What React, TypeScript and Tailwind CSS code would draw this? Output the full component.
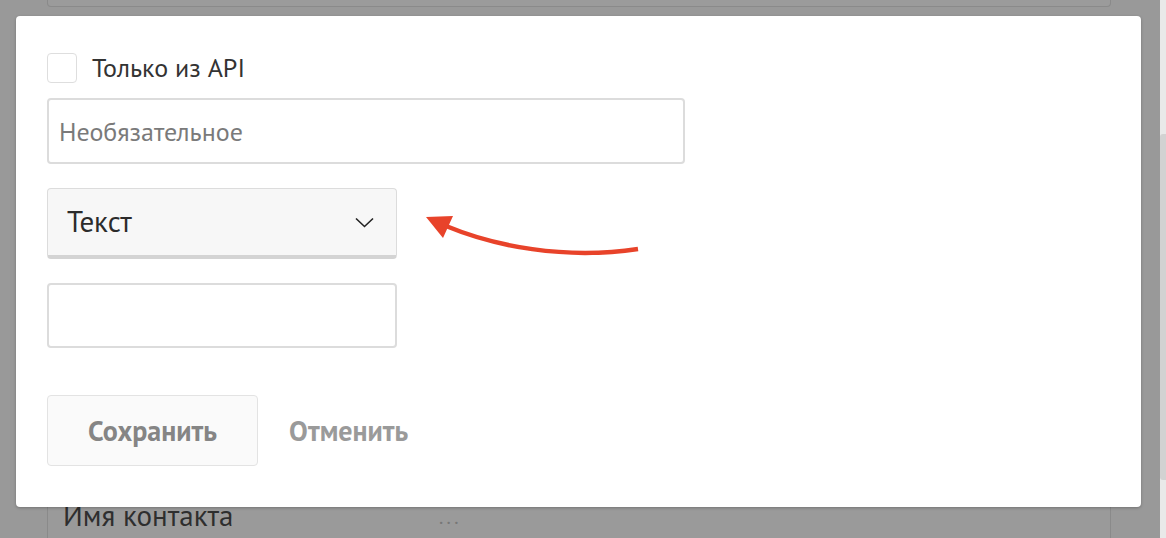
import React from "react";

const font = { fontFamily: '"PT Sans", "Noto Sans", "Open Sans", sans-serif' };

export default function App() {
  return (
    <div className="relative flex h-[538px] w-[1166px] overflow-hidden bg-[#999999]" style={font}>
      {/* background page */}
      <div className="flex flex-1 flex-col justify-between pl-[47px] pr-[49px]">
        <div className="h-[7px] rounded-b-[4px] border-x border-b border-[#8a8a8a] bg-[#9b9b9b]" />
        <div className="flex h-[40px] items-start border-x border-t border-[#8a8a8a] bg-[#9a9a9a] px-[15px] pt-[1px]">
          <span className="w-[376px] text-[29px] leading-[30px] text-[#2e2e2e]">Имя контакта</span>
          <span className="text-[20px] leading-[34px] tracking-[2px] text-[#777]">...</span>
        </div>
      </div>

      {/* scrollbar strip */}
      <div className="flex w-[6px] flex-col bg-[#e9e9e9] pt-[134px] pb-[58px]">
        <div className="flex-1 rounded-l-[3px] bg-[#d2d2d2]" />
      </div>

      {/* modal */}
      <div className="absolute left-[16px] top-[16px] h-[491px] w-[1125px] rounded-[4px] bg-white shadow-[0_1px_3px_rgba(0,0,0,0.25)]">
        <div className="flex flex-col pl-[31px] pt-[37px]">
          <label className="flex items-center gap-[15px]">
            <span className="h-[30px] w-[30px] rounded-[4px] border border-[#dedede] bg-white" />
            <span className="text-[26px] leading-[30px] text-[#333]">Только из API</span>
          </label>

          <div className="mt-[15px] flex h-[66px] w-[638px] items-center rounded-[4px] border-2 border-[#dcdcdc] px-[10px]">
            <span className="text-[26px] text-[#7a7a7a]">Необязательное</span>
          </div>

          <div className="mt-[24px] flex h-[71px] w-[350px] items-center justify-between rounded-[4px] border border-[#dcdcdc] border-b-[4px] border-b-[#d4d4d4] bg-[#f7f7f7] pl-[19px] pr-[22px]">
            <span className="text-[29px] text-[#2b2b2b]">Текст</span>
            <svg width="19" height="11" viewBox="0 0 19 11" fill="none">
              <path d="M1 1.5 L9.5 9.5 L18 1.5" stroke="#222" strokeWidth="1.6" />
            </svg>
          </div>

          <div className="mt-[24px] h-[65px] w-[350px] rounded-[4px] border-2 border-[#dcdcdc]" />

          <div className="mt-[47px] flex items-center">
            <button className="h-[71px] w-[211px] rounded-[4px] border border-[#e3e3e3] bg-[#fafafa] text-[28px] font-bold text-[#858585]">
              Сохранить
            </button>
            <button className="ml-[31px] text-[28px] font-bold text-[#9a9a9a]">Отменить</button>
          </div>
        </div>

        {/* annotation arrow */}
        <svg className="absolute left-[408px] top-[190px]" width="240" height="70" viewBox="0 0 240 70" fill="none">
          <path d="M22 20 C 70 40, 140 54, 214 43" stroke="#e8432a" strokeWidth="4.5" strokeLinecap="butt" />
          <path d="M2 11 L29 10 L19 32 Z" fill="#e8432a" />
        </svg>
      </div>
    </div>
  );
}
